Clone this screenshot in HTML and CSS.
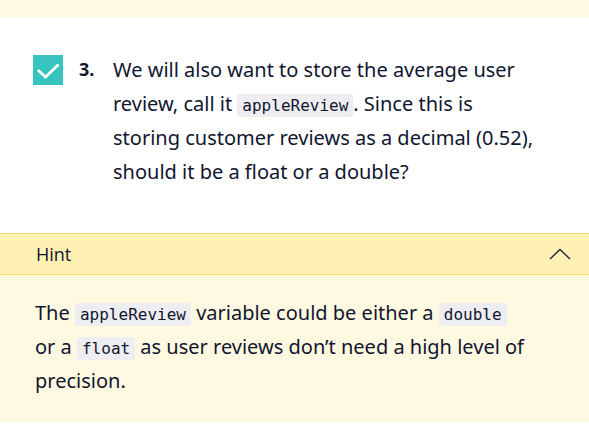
FILE: index.html
```html
<!DOCTYPE html>
<html lang="en">
<head>
<meta charset="utf-8">
<title>Hint</title>
<link rel="stylesheet" href="styles.css">
</head>
<body>
<div class="top-band"></div>
<section class="question">
  <span class="checkbox">
    <svg width="30" height="30" viewBox="0 0 30 30" aria-hidden="true">
      <polyline points="6,16 12.5,22 24.5,10.5" fill="none" stroke="#fff" stroke-width="2.8" stroke-linecap="square"/>
    </svg>
  </span>
  <span class="num">3.</span>
  <p class="qtext">We will also want to store the average user review, call it <code>appleReview</code>. Since this is storing customer reviews as a decimal (0.52), should it be a float or a double?</p>
</section>
<section class="hint">
  <div class="hint-head">
    <span class="hint-title">Hint</span>
    <svg class="chevron" width="22" height="12" viewBox="0 0 22 12" aria-hidden="true">
      <polyline points="1,11 11,1.5 21,11" fill="none" stroke="#2b2b3a" stroke-width="1.5"/>
    </svg>
  </div>
  <div class="hint-body">
    <p>The <code>appleReview</code> variable could be either a <code>double</code> or a <code>float</code> as user reviews don’t need a high level of precision.</p>
  </div>
</section>
</body>
</html>
```

FILE: styles.css
```css
html, body {
  margin: 0;
  padding: 0;
  background: #ffffff;
}
body {
  font-family: "Noto Sans", "Liberation Sans", sans-serif;
  color: #10162f;
  width: 589px;
  height: 428px;
  overflow: hidden;
}
.top-band {
  height: 17px;
  background: #fff9e1;
}
.question {
  display: flex;
  align-items: flex-start;
  padding: 38px 20px 0 33px;
  height: 178px;
  box-sizing: border-box;
}
.checkbox {
  flex: none;
  width: 30px;
  height: 30px;
  background: #37c3be;
  display: block;
}
.checkbox svg { display: block; }
.num {
  flex: none;
  width: 34px;
  margin-left: 16px;
  font-weight: 700;
  font-size: 18px;
  line-height: 34px;
  margin-top: -3px;
}
.qtext {
  margin: -2px 0 0 0;
  font-size: 20px;
  line-height: 34px;
  width: 426px;
}
code {
  font-family: "DejaVu Sans Mono", monospace;
  font-size: 16px;
  line-height: 1;
  background: #eeeef2;
  border-radius: 3px;
  padding: 2px 5px;
  color: #10162f;
}
.hint {
  background: #fff9e1;
  padding-bottom: 24px;
}
.hint-head {
  display: flex;
  align-items: center;
  justify-content: space-between;
  height: 40px;
  background: #fff0b3;
  border-top: 1px solid #fbd969;
  border-bottom: 1px solid #fbd969;
  padding: 0 18px 0 36px;
  margin-top: 38px;
}
.hint-title {
  font-family: "Open Sans", sans-serif;
  font-size: 18px;
}
.chevron { display: block; }
.hint-body {
  padding: 21px 30px 0 35px;
}
.hint-body p {
  margin: 0;
  font-size: 20px;
  line-height: 34px;
  width: 494px;
}
```
